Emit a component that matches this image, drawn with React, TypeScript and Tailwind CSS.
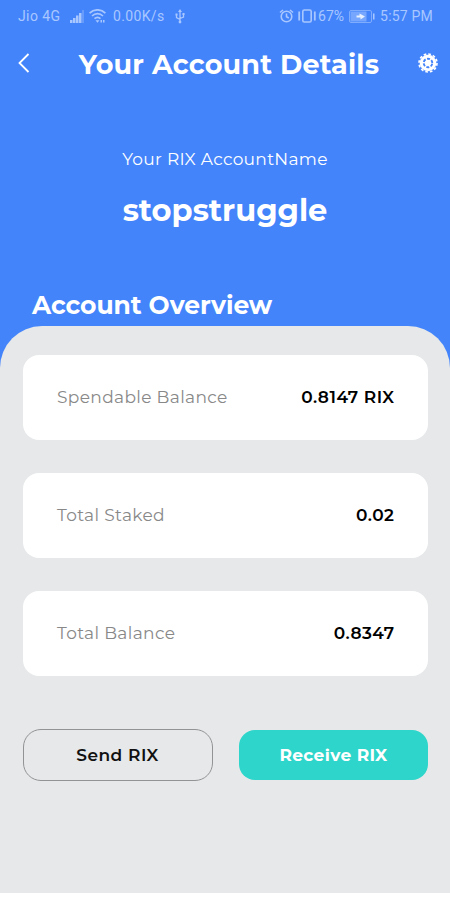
import React from 'react';

const balances = [
  { label: 'Spendable Balance', value: '0.8147 RIX' },
  { label: 'Total Staked', value: '0.02' },
  { label: 'Total Balance', value: '0.8347' },
];

const StatusBar: React.FC = () => (
  <div className="flex h-8 items-center justify-between pl-[18px] pr-[17px] font-[Roboto,sans-serif] text-[14px] text-[#a9c7ff]">
    <div className="flex items-center">
      <span className="w-[52px] whitespace-nowrap tracking-[0.4px]">Jio 4G</span>
      <svg className="h-[13px] w-[14px]" viewBox="0 0 14 13" fill="currentColor">
        <path d="M0 10h2.500v3H0zM3 8h2.500v5H3zM6 5.500h2.500V13H6zM9 3h2.500v10H9z" />
        <path d="M12 0h2v13h-2z" opacity="0.35" />
      </svg>
      <svg
        className="ml-[5px] h-[14px] w-[17px]"
        viewBox="0 0 17 14"
        fill="none"
        stroke="currentColor"
        strokeWidth={1.7}
      >
        <path d="M.6 4.200C5-.3 12-.3 16.400 4.200M3 7c3.200-3.100 7.800-3.100 11 0M5.500 9.700c1.800-1.700 4.200-1.700 6 0" />
        <path d="M6.500 11.200h4l-2 2.500zM11.500 11h1.500v2.500h-1.500zM14 11h1.500v2.500H14z" fill="currentColor" stroke="none" />
      </svg>
      <span className="ml-[7px] w-[52px] whitespace-nowrap tracking-[0.35px]">0.00K/s</span>
      <svg
        className="ml-[10px] h-[15px] w-[10px]"
        viewBox="0 0 10 15"
        fill="none"
        stroke="currentColor"
        strokeWidth={1.3}
      >
        <path d="M5 2v11M1.500 5.500v3L5 10.500M8.500 5v3L5 9.500" />
        <path d="M5 0l2 3H3zM.5 4.500h2v2h-2zM7.500 4h2v2h-2z" fill="currentColor" stroke="none" />
        <circle cx={5} cy={13} r={1.4} fill="currentColor" stroke="none" />
      </svg>
    </div>
    <div className="flex items-center">
      <svg
        className="h-[14px] w-[15px]"
        viewBox="0 0 15 14"
        fill="none"
        stroke="currentColor"
        strokeWidth={1.6}
      >
        <circle cx={7.5} cy={7.5} r={5.3} />
        <path d="M7.500 4.500v3.200l2.300 1.300M1 3.500L4 1M14 3.500L11 1" />
      </svg>
      <svg
        className="ml-[4px] h-[14px] w-[18px]"
        viewBox="0 0 18 14"
        fill="none"
        stroke="currentColor"
        strokeWidth={1.6}
      >
        <rect x={4.8} y={1} width={8.4} height={12} rx={1.5} />
        <path d="M1.200 2.500v9M16.800 2.500v9" strokeWidth={1.8} />
      </svg>
      <span className="ml-[2px] w-[28px] whitespace-nowrap">67%</span>
      <svg className="ml-[3px] h-[13px] w-[26px]" viewBox="0 0 26 13">
        <rect x={0.5} y={0.5} width={22} height={12} rx={1.5} fill="none" stroke="currentColor" opacity={0.6} />
        <rect x={1.5} y={1.5} width={16} height={10} fill="currentColor" opacity={0.5} />
        <path d="M7.500 5.500h3V3.500l5.500 3-4.500 3V7.500h-4z" fill="#e6f0ff" />
        <path d="M24 3.500h1.500v6H24z" fill="currentColor" />
      </svg>
      <span className="ml-[5px] whitespace-nowrap tracking-[0.2px]">5:57 PM</span>
    </div>
  </div>
);

// gear with six cut-outs around the hub
const WheelIcon: React.FC = () => (
  <svg className="h-5 w-5" viewBox="0 0 20 20" fill="none">
    <circle cx={10} cy={10} r={8.3} fill="white" />
    <circle cx={10} cy={10} r={9} stroke="white" strokeWidth={1.6} strokeDasharray="2.700 2.012" />
    <circle
      cx={10}
      cy={10}
      r={4.3}
      stroke="#4384fb"
      strokeWidth={1.9}
      strokeDasharray="3 1.503"
      strokeDashoffset={-0.75}
    />
  </svg>
);

const Header: React.FC = () => (
  <header className="flex h-[62px] items-center justify-between pl-[18px] pr-3">
    <button type="button" aria-label="Back">
      <svg className="h-5 w-3" viewBox="0 0 12 20" fill="none" stroke="white" strokeWidth={1.8}>
        <path d="M10.500 1L1.500 10l9 9" />
      </svg>
    </button>
    <h1 className="ml-[10px] mt-[3px] whitespace-nowrap text-[27px] leading-8 font-bold tracking-[0.2px]">
      Your Account Details
    </h1>
    <button type="button" aria-label="Settings">
      <WheelIcon />
    </button>
  </header>
);

const App: React.FC = () => {
  return (
    <div className="flex h-[900px] w-[450px] flex-col overflow-hidden bg-white font-[Montserrat,Inter,sans-serif]">
      <div className="flex h-[893px] flex-col bg-[#4384fb] text-white">
        <StatusBar />
        <Header />
        <section className="flex h-[194px] flex-col items-center pt-[53px]">
          <p className="text-[17px] leading-6 font-normal tracking-[0.3px]">Your RIX AccountName</p>
          <p className="mt-[19px] text-[30.5px] leading-10 font-bold">stopstruggle</p>
        </section>
        <h2 className="h-[38px] pl-8 text-[25px] leading-[34px] font-bold tracking-[-0.05px]">Account Overview</h2>

        <main className="flex flex-1 flex-col rounded-t-[42px] bg-[#e6e8e9] pt-[29px] pr-[22px] pl-[23px]">
          <div className="flex flex-col gap-[33px]">
            {balances.map((item) => (
              <div
                key={item.label}
                className="flex h-[85px] items-center justify-between rounded-[16px] bg-white px-[34px]"
              >
                <span className="text-[17px] font-normal tracking-[0.35px] text-[#888888]">{item.label}</span>
                <span className="-mr-[0.5px] text-[17px] font-semibold tracking-[0.5px] text-black">{item.value}</span>
              </div>
            ))}
          </div>

          <div className="mt-[53px] flex items-center justify-between">
            <button
              type="button"
              className="-ml-[0.5px] h-[52px] w-[190px] rounded-[18px] border border-[#929395] pt-[2px] text-[17px] font-semibold tracking-[0.5px] text-[#111111]"
            >
              Send RIX
            </button>
            <button
              type="button"
              className="h-[50px] w-[189px] rounded-[16px] bg-[#2dd5ca] pt-[2px] text-[17px] font-bold tracking-[0.35px] text-white"
            >
              Receive RIX
            </button>
          </div>
        </main>
      </div>
    </div>
  );
};

export default App;
